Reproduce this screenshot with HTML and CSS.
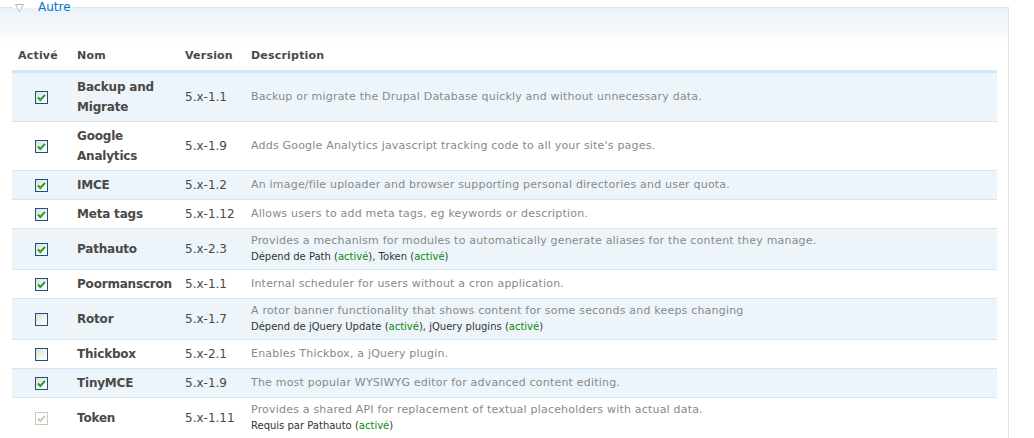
FILE: index.html
```html
<!DOCTYPE html>
<html lang="fr">
<head>
<meta charset="utf-8">
<title>Modules</title>
<link rel="stylesheet" href="styles.css">
</head>
<body>
<fieldset class="group">
  <legend class="group-legend"><svg class="arrow" width="9" height="9" viewBox="0 0 9 9"><polygon points="0.5,1.5 8.5,1.5 4.5,8.5" fill="#fff" stroke="#b9b9b9" stroke-width="1"/></svg><a class="group-link" href="#">Autre</a></legend>
  <table class="modules">
    <thead>
      <tr>
        <th class="c-on">Activé</th>
        <th class="c-name">Nom</th>
        <th class="c-ver">Version</th>
        <th class="c-desc">Description</th>
      </tr>
    </thead>
    <tbody>
      <tr class="odd">
        <td class="c-on"><span class="cb on"><svg viewBox="0 0 11 11" width="11" height="11"><polyline points="2,5.5 4.3,8 9,2.8" fill="none" stroke="#21a121" stroke-width="2"/></svg></span></td>
        <td class="c-name">Backup and Migrate</td>
        <td class="c-ver">5.x-1.1</td>
        <td class="c-desc"><div class="desc">Backup or migrate the Drupal Database quickly and without unnecessary data.</div></td>
      </tr>
      <tr class="even">
        <td class="c-on"><span class="cb on"><svg viewBox="0 0 11 11" width="11" height="11"><polyline points="2,5.5 4.3,8 9,2.8" fill="none" stroke="#21a121" stroke-width="2"/></svg></span></td>
        <td class="c-name">Google Analytics</td>
        <td class="c-ver">5.x-1.9</td>
        <td class="c-desc"><div class="desc">Adds Google Analytics javascript tracking code to all your site's pages.</div></td>
      </tr>
      <tr class="odd">
        <td class="c-on"><span class="cb on"><svg viewBox="0 0 11 11" width="11" height="11"><polyline points="2,5.5 4.3,8 9,2.8" fill="none" stroke="#21a121" stroke-width="2"/></svg></span></td>
        <td class="c-name">IMCE</td>
        <td class="c-ver">5.x-1.2</td>
        <td class="c-desc"><div class="desc">An image/file uploader and browser supporting personal directories and user quota.</div></td>
      </tr>
      <tr class="even">
        <td class="c-on"><span class="cb on"><svg viewBox="0 0 11 11" width="11" height="11"><polyline points="2,5.5 4.3,8 9,2.8" fill="none" stroke="#21a121" stroke-width="2"/></svg></span></td>
        <td class="c-name">Meta tags</td>
        <td class="c-ver">5.x-1.12</td>
        <td class="c-desc"><div class="desc">Allows users to add meta tags, eg keywords or description.</div></td>
      </tr>
      <tr class="odd">
        <td class="c-on"><span class="cb on"><svg viewBox="0 0 11 11" width="11" height="11"><polyline points="2,5.5 4.3,8 9,2.8" fill="none" stroke="#21a121" stroke-width="2"/></svg></span></td>
        <td class="c-name">Pathauto</td>
        <td class="c-ver">5.x-2.3</td>
        <td class="c-desc"><div class="desc">Provides a mechanism for modules to automatically generate aliases for the content they manage.</div><div class="deps">Dépend de Path (<span class="ok">activé</span>), Token (<span class="ok">activé</span>)</div></td>
      </tr>
      <tr class="even">
        <td class="c-on"><span class="cb on"><svg viewBox="0 0 11 11" width="11" height="11"><polyline points="2,5.5 4.3,8 9,2.8" fill="none" stroke="#21a121" stroke-width="2"/></svg></span></td>
        <td class="c-name">Poormanscron</td>
        <td class="c-ver">5.x-1.1</td>
        <td class="c-desc"><div class="desc">Internal scheduler for users without a cron application.</div></td>
      </tr>
      <tr class="odd">
        <td class="c-on"><span class="cb"></span></td>
        <td class="c-name">Rotor</td>
        <td class="c-ver">5.x-1.7</td>
        <td class="c-desc"><div class="desc">A rotor banner functionality that shows content for some seconds and keeps changing</div><div class="deps">Dépend de jQuery Update (<span class="ok">activé</span>), jQuery plugins (<span class="ok">activé</span>)</div></td>
      </tr>
      <tr class="even">
        <td class="c-on"><span class="cb"></span></td>
        <td class="c-name">Thickbox</td>
        <td class="c-ver">5.x-2.1</td>
        <td class="c-desc"><div class="desc">Enables Thickbox, a jQuery plugin.</div></td>
      </tr>
      <tr class="odd">
        <td class="c-on"><span class="cb on"><svg viewBox="0 0 11 11" width="11" height="11"><polyline points="2,5.5 4.3,8 9,2.8" fill="none" stroke="#21a121" stroke-width="2"/></svg></span></td>
        <td class="c-name">TinyMCE</td>
        <td class="c-ver">5.x-1.9</td>
        <td class="c-desc"><div class="desc">The most popular WYSIWYG editor for advanced content editing.</div></td>
      </tr>
      <tr class="even">
        <td class="c-on"><span class="cb disabled"><svg viewBox="0 0 11 11" width="11" height="11"><polyline points="2,5.5 4.3,8 9,2.8" fill="none" stroke="#c9c7ba" stroke-width="2"/></svg></span></td>
        <td class="c-name">Token</td>
        <td class="c-ver">5.x-1.11</td>
        <td class="c-desc"><div class="desc">Provides a shared API for replacement of textual placeholders with actual data.</div><div class="deps">Requis par Pathauto (<span class="ok">activé</span>)</div></td>
      </tr>
    </tbody>
  </table>
</fieldset>
</body>
</html>
```

FILE: styles.css
```css
html, body {
  margin: 0;
  padding: 0;
  background: #fff;
}

body {
  font-family: "DejaVu Sans", Verdana, sans-serif;
  font-size: 12px;
  color: #494949;
  overflow: hidden;
}

.group {
  margin: 0 25px 0 -2px;
  padding: 0 11px 10px 14px;
  border: 1px solid #d5e6f3;
  border-left: 0;
  background: linear-gradient(to bottom, #eaf2f9 0, #ffffff 40px);
  min-width: 0;
}

.group-legend {
  padding: 0 2px 0 3px;
  margin: 0;
  font-size: 12px;
  line-height: 14px;
  display: flex;
  align-items: center;
}

.arrow {
  display: block;
  margin-right: 14px;
}

.group-link {
  color: #027ac6;
  text-decoration: none;
}

.modules {
  width: 100%;
  border-collapse: collapse;
  table-layout: fixed;
  margin-top: 28px;
}

.modules th {
  text-align: left;
  font-weight: bold;
  font-size: 11px;
  line-height: 20px;
  padding: 4px 6px;
  color: #494949;
  border-bottom: 3px solid #d3e7f4;
  letter-spacing: 0.2px;
}

.modules td {
  padding: 4px 6px;
  line-height: 20px;
  vertical-align: middle;
  border-bottom: 1px solid #d3e7f4;
}

.modules tr.odd td {
  background: #edf5fa;
}

.modules tr.even td {
  background: #fff;
}

.modules .c-on { width: 47px; }
.modules .c-name { width: 96px; }
.modules .c-ver { width: 54px; }

.modules td.c-on {
  padding-left: 23px;
  padding-right: 0;
  width: 36px;
}

.modules td.c-name {
  font-weight: bold;
  font-size: 12px;
  letter-spacing: -0.2px;
}

.modules td.c-ver {
  font-size: 12px;
  color: #494949;
}

.cb {
  display: flex;
  align-items: center;
  justify-content: center;
  width: 11px;
  height: 11px;
  border: 1px solid #1c5180;
  background: linear-gradient(135deg, #dcdcd7 0%, #f4f4f2 60%, #ffffff 100%);
}

.cb svg { display: block; }

.cb.disabled {
  border-color: #cac8bb;
  background: #fff;
}

.desc {
  font-size: 11px;
  line-height: 16px;
  color: #898989;
  letter-spacing: 0.2px;
}

.deps {
  font-size: 10px;
  line-height: 16px;
  color: #333;
}

.ok {
  color: #0a8a0a;
}
```
